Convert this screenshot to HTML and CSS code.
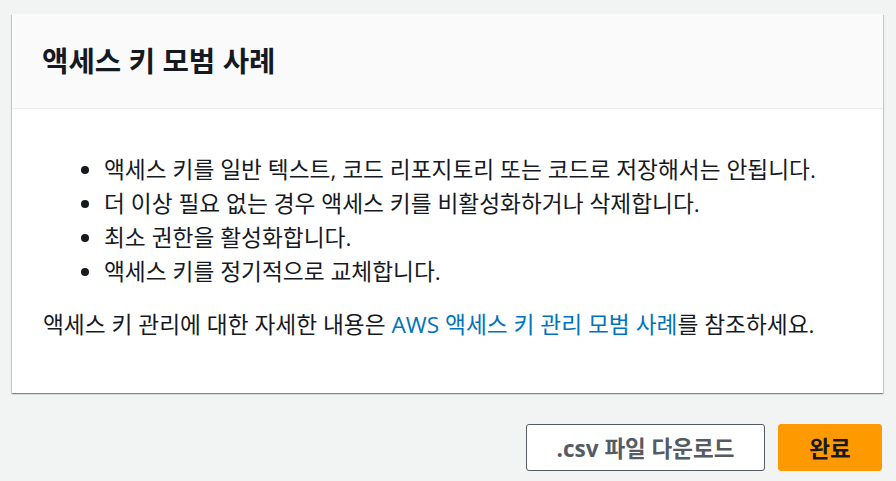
FILE: index.html
```html
<!DOCTYPE html>
<html lang="ko">
<head>
<meta charset="utf-8">
<link rel="stylesheet" href="styles.css">
</head>
<body>
<div class="page">
  <div class="card">
    <div class="card-header">
      <h2 class="title">액세스 키 모범 사례</h2>
    </div>
    <div class="card-body">
      <ul class="list">
        <li>액세스 키를 일반 텍스트, 코드 리포지토리 또는 코드로 저장해서는 안됩니다.</li>
        <li>더 이상 필요 없는 경우 액세스 키를 비활성화하거나 삭제합니다.</li>
        <li>최소 권한을 활성화합니다.</li>
        <li>액세스 키를 정기적으로 교체합니다.</li>
      </ul>
      <p class="note">액세스 키 관리에 대한 자세한 내용은 <a class="link" href="#">AWS 액세스 키 관리 모범 사례</a>를 참조하세요.</p>
    </div>
  </div>
  <div class="footer">
    <button class="btn btn-normal">.csv 파일 다운로드</button>
    <button class="btn btn-primary">완료</button>
  </div>
</div>
</body>
</html>
```

FILE: styles.css
```css
html, body {
  margin: 0;
  padding: 0;
  background: #f2f3f3;
}
body {
  font-family: "Open Sans", "Noto Sans CJK KR", sans-serif;
  color: #16191f;
  font-size: 22.7px;
  line-height: 34px;
}
.page {
  padding: 14px 13px 0 12px;
}
.card {
  background: #ffffff;
  box-shadow: 0 1px 1px 0 rgba(0, 28, 36, 0.3), 1px 1px 1px 0 rgba(0, 28, 36, 0.15), -1px 1px 1px 0 rgba(0, 28, 36, 0.15);
}
.card-header {
  background: #fafafa;
  border-bottom: 1px solid #eaeded;
  height: 94px;
  display: flex;
  align-items: center;
  padding: 0 30px;
}
.title {
  margin: 0;
  font-size: 28.7px;
  line-height: 40px;
  font-weight: 700;
}
.card-body {
  padding: 44px 30px 51px 31px;
}
.list {
  margin: 0;
  padding: 0 0 0 61px;
}
.list li {
  margin: 0;
}
.note {
  margin: 19px 0 0 0;
}
.link {
  color: #0073bb;
  text-decoration: none;
}
.footer {
  display: flex;
  justify-content: flex-end;
  gap: 13px;
  margin-top: 31px;
  padding-right: 1px;
}
.btn {
  font-family: "Open Sans", "Noto Sans CJK KR", sans-serif;
  font-size: 22.5px;
  font-weight: 700;
  height: 47px;
  border-radius: 3px;
  padding: 0;
  cursor: pointer;
}
.btn-normal {
  background: #ffffff;
  color: #545b64;
  border: 1.5px solid #545b64;
  width: 239px;
}
.btn-primary {
  background: #ff9900;
  color: #16191f;
  border: 1px solid #ff9900;
  width: 104px;
}
```
